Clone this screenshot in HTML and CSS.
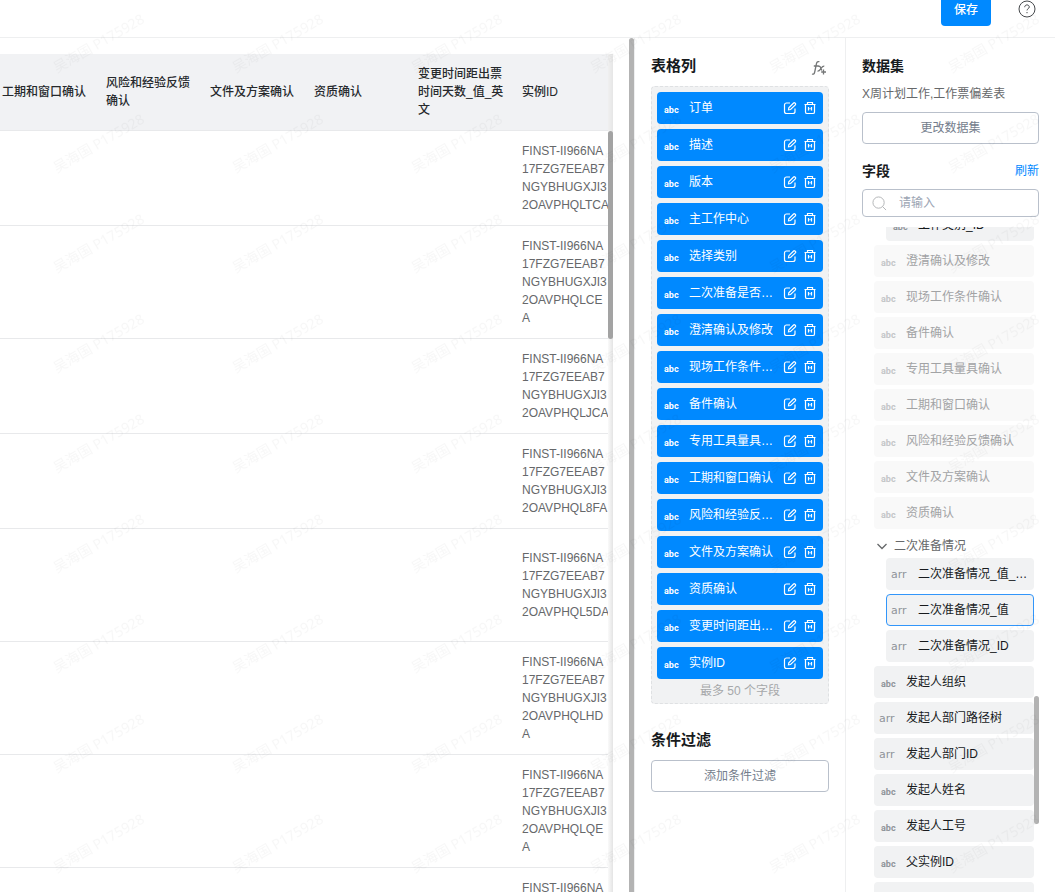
FILE: index.html
```html
<!DOCTYPE html>
<html lang="zh-CN">
<head>
    <meta charset="UTF-8">
    <meta name="viewport" content="width=device-width, initial-scale=1.0">
    <title>表格列</title>
    <link rel="stylesheet" href="styles.css">
</head>
<body>

<svg class="symbols" aria-hidden="true">
    <symbol id="edit" viewBox="0 0 14 14">
        <path d="M7 2H3.500c-1.200 0-2 .8-2 2v6.500c0 1.200.8 2 2 2H10c1.200 0 2-.8 2-2V7.500"/>
        <path d="M5.500 8.800l.3-2L10.600 2c.4-.4.9-.4 1.300 0l.5.500c.4.400.4.900 0 1.300L7.600 8.500z"/>
    </symbol>
    <symbol id="trash" viewBox="0 0 14 14">
        <path d="M1.500 3.500h11M4.500 3.500V1.500h5v2"/>
        <path d="M2.500 3.500v7.400c0 1 .6 1.600 1.600 1.600h5.800c1 0 1.600-.6 1.600-1.600V3.500M5.500 6v3.500M8.500 6v3.500"/>
        <path d="M5.500 7.700h3" stroke-opacity=".6"/>
    </symbol>
</svg>

<header class="header">
    <button class="save">保存</button>
    <button class="help" aria-label="帮助">
        <svg viewBox="0 0 18 18">
            <circle cx="9" cy="9" r="8"/>
            <path d="M6.700 7.200c0-1.400 1-2.300 2.300-2.300s2.300.9 2.300 2.100c0 1.600-2.300 1.700-2.300 3.400M9 12v1.200"/>
        </svg>
    </button>
</header>

<main class="main">
    <section class="preview">
        <div class="table-box">
            <div class="table-view">
                <table>
                    <thead>
                    <tr>
                        <th>工期和窗口确认</th>
                        <th>风险和经验反馈确认</th>
                        <th>文件及方案确认</th>
                        <th>资质确认</th>
                        <th>变更时间距出票时间天数_值_英文</th>
                        <th>实例ID</th>
                    </tr>
                    </thead>
                    <tbody>
                    <tr><td></td><td></td><td></td><td></td><td></td><td>FINST-II966NA17FZG7EEAB7NGYBHUGXJI32OAVPHQLTCA</td></tr>
                    <tr><td></td><td></td><td></td><td></td><td></td><td>FINST-II966NA17FZG7EEAB7NGYBHUGXJI32OAVPHQLCEA</td></tr>
                    <tr><td></td><td></td><td></td><td></td><td></td><td>FINST-II966NA17FZG7EEAB7NGYBHUGXJI32OAVPHQLJCA</td></tr>
                    <tr><td></td><td></td><td></td><td></td><td></td><td>FINST-II966NA17FZG7EEAB7NGYBHUGXJI32OAVPHQL8FA</td></tr>
                    <tr class="tall"><td></td><td></td><td></td><td></td><td></td><td>FINST-II966NA17FZG7EEAB7NGYBHUGXJI32OAVPHQL5DA</td></tr>
                    <tr><td></td><td></td><td></td><td></td><td></td><td>FINST-II966NA17FZG7EEAB7NGYBHUGXJI32OAVPHQLHDA</td></tr>
                    <tr><td></td><td></td><td></td><td></td><td></td><td>FINST-II966NA17FZG7EEAB7NGYBHUGXJI32OAVPHQLQEA</td></tr>
                    <tr><td></td><td></td><td></td><td></td><td></td><td>FINST-II966NA</td></tr>
                    </tbody>
                </table>
            </div>
            <div class="table-bar">
                <div class="table-bar-head"></div>
                <div class="table-thumb"></div>
            </div>
        </div>
        <div class="page-thumb"></div>
    </section>

    <section class="panel columns">
        <div class="title-row">
            <h2>表格列</h2>
            <button class="fx" aria-label="添加公式">
                <svg viewBox="0 0 16 16">
                    <path d="M1 14c1.500.6 2.300-.2 2.700-2L5.400 3.800C5.800 2 6.700 1.200 8.400 1.700M2.800 6h5"/>
                    <path d="M7.300 6.500c1.400-.7 2 .2 2.500 1.700l1 2.300M13.300 6.200c-1.600-.2-2.400 1-3.300 2.200-1 1.400-1.600 2.900-3.500 2.700M12.500 9.600v4.800M10.200 12h4.800"/>
                </svg>
            </button>
        </div>
        <div class="drop-box">
            <ul class="column-list">
                <li><span class="type">abc</span><span class="name">订单</span><button aria-label="编辑"><svg><use href="#edit"/></svg></button><button aria-label="删除"><svg><use href="#trash"/></svg></button></li>
                <li><span class="type">abc</span><span class="name">描述</span><button aria-label="编辑"><svg><use href="#edit"/></svg></button><button aria-label="删除"><svg><use href="#trash"/></svg></button></li>
                <li><span class="type">abc</span><span class="name">版本</span><button aria-label="编辑"><svg><use href="#edit"/></svg></button><button aria-label="删除"><svg><use href="#trash"/></svg></button></li>
                <li><span class="type">abc</span><span class="name">主工作中心</span><button aria-label="编辑"><svg><use href="#edit"/></svg></button><button aria-label="删除"><svg><use href="#trash"/></svg></button></li>
                <li><span class="type">abc</span><span class="name">选择类别</span><button aria-label="编辑"><svg><use href="#edit"/></svg></button><button aria-label="删除"><svg><use href="#trash"/></svg></button></li>
                <li><span class="type">abc</span><span class="name">二次准备是否…</span><button aria-label="编辑"><svg><use href="#edit"/></svg></button><button aria-label="删除"><svg><use href="#trash"/></svg></button></li>
                <li><span class="type">abc</span><span class="name">澄清确认及修改</span><button aria-label="编辑"><svg><use href="#edit"/></svg></button><button aria-label="删除"><svg><use href="#trash"/></svg></button></li>
                <li><span class="type">abc</span><span class="name">现场工作条件…</span><button aria-label="编辑"><svg><use href="#edit"/></svg></button><button aria-label="删除"><svg><use href="#trash"/></svg></button></li>
                <li><span class="type">abc</span><span class="name">备件确认</span><button aria-label="编辑"><svg><use href="#edit"/></svg></button><button aria-label="删除"><svg><use href="#trash"/></svg></button></li>
                <li><span class="type">abc</span><span class="name">专用工具量具…</span><button aria-label="编辑"><svg><use href="#edit"/></svg></button><button aria-label="删除"><svg><use href="#trash"/></svg></button></li>
                <li><span class="type">abc</span><span class="name">工期和窗口确认</span><button aria-label="编辑"><svg><use href="#edit"/></svg></button><button aria-label="删除"><svg><use href="#trash"/></svg></button></li>
                <li><span class="type">abc</span><span class="name">风险和经验反…</span><button aria-label="编辑"><svg><use href="#edit"/></svg></button><button aria-label="删除"><svg><use href="#trash"/></svg></button></li>
                <li><span class="type">abc</span><span class="name">文件及方案确认</span><button aria-label="编辑"><svg><use href="#edit"/></svg></button><button aria-label="删除"><svg><use href="#trash"/></svg></button></li>
                <li><span class="type">abc</span><span class="name">资质确认</span><button aria-label="编辑"><svg><use href="#edit"/></svg></button><button aria-label="删除"><svg><use href="#trash"/></svg></button></li>
                <li><span class="type">abc</span><span class="name">变更时间距出…</span><button aria-label="编辑"><svg><use href="#edit"/></svg></button><button aria-label="删除"><svg><use href="#trash"/></svg></button></li>
                <li><span class="type">abc</span><span class="name">实例ID</span><button aria-label="编辑"><svg><use href="#edit"/></svg></button><button aria-label="删除"><svg><use href="#trash"/></svg></button></li>
            </ul>
            <p class="limit">最多 50 个字段</p>
        </div>
        <h2 class="filter-title">条件过滤</h2>
        <button class="outline">添加条件过滤</button>
    </section>

    <section class="panel fields">
        <h2>数据集</h2>
        <p class="dataset">X周计划工作,工作票偏差表</p>
        <button class="outline">更改数据集</button>
        <div class="title-row field-title">
            <h2>字段</h2>
            <a href="#">刷新</a>
        </div>
        <label class="search">
            <svg viewBox="0 0 16 16"><circle cx="7" cy="7" r="6"/><path d="M11.300 11.300l3.700 3.700"/></svg>
            <input type="text" placeholder="请输入" aria-label="搜索字段">
        </label>
        <div class="field-box">
            <ul class="field-list">
                <li class="child"><span class="type">abc</span><span class="name">工作类别_ID</span></li>
                <li class="used"><span class="type">abc</span><span class="name">澄清确认及修改</span></li>
                <li class="used"><span class="type">abc</span><span class="name">现场工作条件确认</span></li>
                <li class="used"><span class="type">abc</span><span class="name">备件确认</span></li>
                <li class="used"><span class="type">abc</span><span class="name">专用工具量具确认</span></li>
                <li class="used"><span class="type">abc</span><span class="name">工期和窗口确认</span></li>
                <li class="used"><span class="type">abc</span><span class="name">风险和经验反馈确认</span></li>
                <li class="used"><span class="type">abc</span><span class="name">文件及方案确认</span></li>
                <li class="used"><span class="type">abc</span><span class="name">资质确认</span></li>
                <li class="group"><svg viewBox="0 0 12 12"><path d="M1.500 4L6 8.500 10.500 4"/></svg>二次准备情况</li>
                <li class="child"><span class="type arr">arr</span><span class="name">二次准备情况_值_…</span></li>
                <li class="child active"><span class="type arr">arr</span><span class="name">二次准备情况_值</span></li>
                <li class="child"><span class="type arr">arr</span><span class="name">二次准备情况_ID</span></li>
                <li><span class="type">abc</span><span class="name">发起人组织</span></li>
                <li><span class="type arr">arr</span><span class="name">发起人部门路径树</span></li>
                <li><span class="type arr">arr</span><span class="name">发起人部门ID</span></li>
                <li><span class="type">abc</span><span class="name">发起人姓名</span></li>
                <li><span class="type">abc</span><span class="name">发起人工号</span></li>
                <li><span class="type">abc</span><span class="name">父实例ID</span></li>
                <li></li>
            </ul>
            <div class="field-thumb"></div>
        </div>
    </section>
</main>

<svg class="watermark" aria-hidden="true">
    <defs>
        <pattern id="mark" width="179" height="100" patternUnits="userSpaceOnUse">
            <text x="57" y="73" transform="rotate(-30 57 73)">吴海国 P175928</text>
        </pattern>
    </defs>
    <rect width="100%" height="100%" fill="url(#mark)"/>
</svg>

</body>
</html>
```

FILE: styles.css
```css
* {
    margin: 0;
    padding: 0;
    box-sizing: border-box;
}

body {
    height: 100vh;
    display: flex;
    flex-direction: column;
    overflow: hidden;
    background: #fff;
    color: #171a1d;
    font: 12px/18px "Liberation Sans", "Noto Sans CJK SC", sans-serif;
}

ul {
    list-style: none;
}

a {
    color: #0089ff;
    text-decoration: none;
}

button {
    border: none;
    background: none;
    font: inherit;
    color: inherit;
    cursor: pointer;
}

svg {
    display: block;
    fill: none;
    stroke: currentColor;
}

h2 {
    font-size: 14px;
    line-height: 20px;
    font-weight: bold;
}

.symbols {
    display: none;
}

/* header */

.header {
    flex: none;
    height: 38px;
    padding-right: 19px;
    display: flex;
    justify-content: flex-end;
    align-items: flex-start;
    gap: 27px;
    border-bottom: 1px solid #eeeff0;
}

.save {
    height: 32px;
    margin-top: -6px;
    padding: 0 13px;
    border-radius: 4px;
    background: #0089ff;
    color: #fff;
    font-weight: 500;
}

.help svg {
    width: 18px;
    height: 18px;
    color: #45484b;
}

.main {
    flex: 1;
    min-height: 0;
    display: flex;
}

/* preview table */

.preview {
    flex: 1;
    min-width: 0;
    display: flex;
    justify-content: space-between;
    gap: 16px;
}

.table-box {
    flex: 1;
    min-width: 0;
    margin-top: 16px;
    display: flex;
    overflow: hidden;
}

.table-view {
    flex: 1;
    min-width: 0;
    overflow: hidden;
}

table {
    width: 624px;
    margin-left: -6px;
    table-layout: fixed;
    border-collapse: separate;
    border-spacing: 0;
}

th,
td {
    padding: 11px 8px;
    border-bottom: 1px solid #e8e9eb;
    text-align: left;
    vertical-align: middle;
    word-break: break-all;
}

th {
    background: #f1f2f4;
    font-weight: 500;
    color: #26292c;
}

td {
    color: #66686a;
}

.tall {
    height: 113px;
}

.table-bar {
    flex: none;
    width: 5px;
    background: linear-gradient(to right, #fafafa, #e4e4e4);
}

.table-bar-head {
    height: 77px;
    background: linear-gradient(to right, #f0f0f0, #e6e6e6);
}

.table-thumb {
    height: 208px;
    border-radius: 3px;
    background: #a3a3a3;
}

.page-thumb {
    flex: none;
    width: 5px;
    border-radius: 3px 3px 0 0;
    background: #b3b3b3;
}

/* side panels */

.panel {
    flex: none;
    width: 211px;
    padding: 18px 16px 0 16px;
    border-left: 1px solid #eeeff0;
    display: flex;
    flex-direction: column;
}

.fields {
    width: 210px;
}

.title-row {
    display: flex;
    justify-content: space-between;
    align-items: center;
}

.columns h2 {
    font-size: 15px;
}

.fx {
    padding: 3px 2px 0 0;
}

.fx svg {
    width: 16px;
    height: 16px;
    color: #747677;
    stroke-width: 1.3;
}

.drop-box {
    margin-top: 10px;
    padding: 5px;
    border: 1px dashed #dfe1e3;
    border-radius: 4px;
    background: #f1f2f3;
}

.column-list li {
    height: 32px;
    margin-bottom: 5px;
    padding: 0 6px 0 7px;
    display: flex;
    align-items: center;
    border-radius: 4px;
    background: #0089ff;
    color: #fff;
}

.column-list button {
    flex: none;
    margin-left: 6px;
}

.column-list svg {
    width: 14px;
    height: 14px;
    stroke-width: 1.2;
}

.type {
    flex: none;
    width: 25px;
    padding-top: 3px;
    font: bold 9px/18px Roboto, sans-serif;
}

.arr {
    padding-top: 1px;
    font: 11px/18px "DejaVu Sans", sans-serif;
}

.name {
    flex: 1;
    min-width: 0;
    overflow: hidden;
    white-space: nowrap;
    text-overflow: ellipsis;
}

.limit {
    text-align: center;
    line-height: 14px;
    color: #a6a8aa;
}

.filter-title {
    margin: 26px 0 10px;
}

.outline {
    height: 32px;
    flex: none;
    border: 1px solid #b9c0cb;
    border-radius: 4px;
    color: #747d8c;
}

.dataset {
    margin: 9px 0;
    color: #66686a;
}

.field-title {
    margin: 17px 0 8px;
}

.search {
    flex: none;
    height: 28px;
    padding: 0 9px;
    display: flex;
    align-items: center;
    gap: 12px;
    border: 1px solid #b9c0cb;
    border-radius: 4px;
}

.search svg {
    flex: none;
    width: 15px;
    height: 15px;
    color: #b0b2b4;
}

.search input {
    flex: 1;
    min-width: 0;
    border: none;
    outline: none;
    font: inherit;
}

.search input::placeholder {
    color: #9ca5b3;
}

.field-box {
    flex: 1;
    min-height: 0;
    margin-top: 10px;
    position: relative;
    overflow: hidden;
}

.field-list {
    margin-top: -18px;
    padding: 0 5px 0 12px;
}

.field-list li {
    height: 32px;
    margin-bottom: 4px;
    padding: 0 4px 0 7px;
    display: flex;
    align-items: center;
    border-radius: 4px;
    background: #f1f2f3;
}

.field-list .child {
    margin-left: 12px;
}

.field-list .type {
    color: #8f9499;
}

.field-list .arr {
    margin-left: -2px;
    width: 27px;
}

.field-list .used {
    background: #f9f9f9;
    color: #a2a3a5;
}

.field-list .used .type {
    color: #c4c6c8;
}

.field-list .active {
    padding: 0 3px 0 6px;
    border: 1px solid #3296fa;
}

.field-list .group {
    height: 25px;
    margin: 0;
    padding: 0 2px;
    gap: 6px;
    background: none;
    color: #66686a;
}

.group svg {
    width: 12px;
    height: 12px;
    stroke-width: 1.3;
}

.field-thumb {
    position: absolute;
    top: 469px;
    right: 0;
    width: 5px;
    height: 128px;
    border-radius: 3px;
    background: #b3b3b3;
}

.watermark {
    position: fixed;
    top: 0;
    left: 0;
    width: 100%;
    height: 100%;
    pointer-events: none;
    stroke: none;
}

.watermark text {
    font: 14px "Noto Sans", "Noto Sans CJK SC", sans-serif;
    fill: rgba(0, 0, 0, .03);
}
```
